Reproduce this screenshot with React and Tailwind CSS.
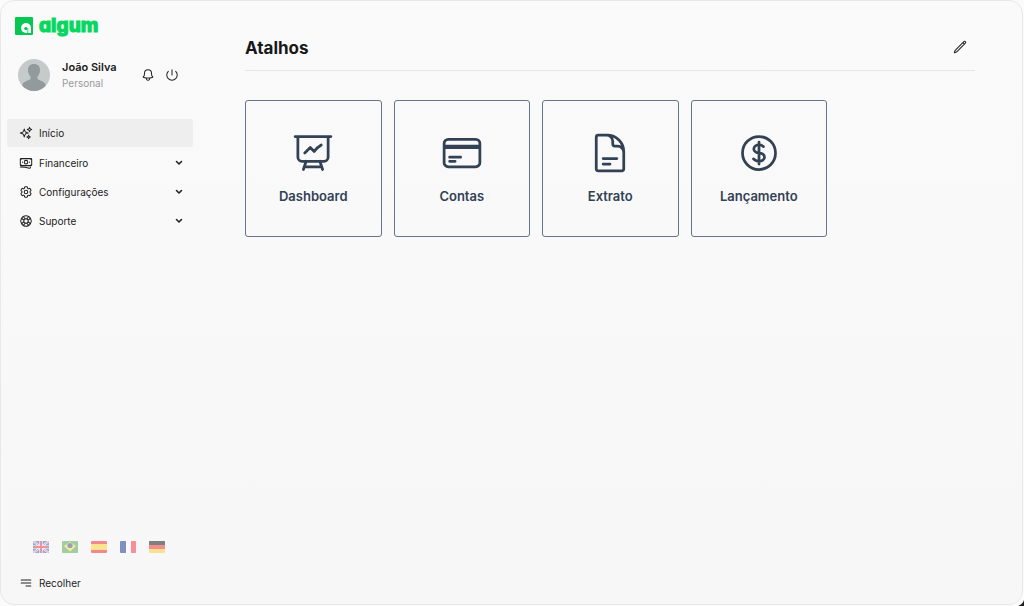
import {
  HiOutlineBanknotes,
  HiOutlineBars3BottomRight,
  HiOutlineBell,
  HiOutlineCog6Tooth,
  HiOutlineCreditCard,
  HiOutlineCurrencyDollar,
  HiOutlineDocumentText,
  HiOutlineLifebuoy,
  HiOutlinePencil,
  HiOutlinePower,
  HiOutlinePresentationChartLine,
  HiOutlineSparkles,
} from "react-icons/hi2";

const menu = [
  { label: "Financeiro", Icon: HiOutlineBanknotes },
  { label: "Configurações", Icon: HiOutlineCog6Tooth },
  { label: "Suporte", Icon: HiOutlineLifebuoy },
];

const shortcuts = [
  { label: "Dashboard", Icon: HiOutlinePresentationChartLine },
  { label: "Contas", Icon: HiOutlineCreditCard },
  { label: "Extrato", Icon: HiOutlineDocumentText },
  { label: "Lançamento", Icon: HiOutlineCurrencyDollar },
];

const flags = [
  {
    label: "English",
    art: (
      <>
        <rect width="16" height="12" fill="#2468bc" />
        <path d="M0 0l16 12M16 0L0 12" stroke="#fff" strokeWidth="2" />
        <path d="M0 0l16 12M16 0L0 12" stroke="#e5455a" strokeWidth="1" />
        <path d="M8 0v12M0 6h16" stroke="#fff" strokeWidth="3.200" />
        <path d="M8 0v12M0 6h16" stroke="#e5304a" strokeWidth="2" />
      </>
    ),
  },
  {
    label: "Português",
    art: (
      <>
        <rect width="16" height="12" fill="#4ba64b" />
        <path d="M8 1L14 5l-6 5.500L2 5z" fill="#ffdc3c" />
        <circle cx="8" cy="4.500" r="2.600" fill="#2b4a9b" />
      </>
    ),
  },
  {
    label: "Español",
    art: (
      <>
        <rect width="16" height="12" fill="#f01c24" />
        <rect y="3" width="16" height="6" fill="#ffd02e" />
      </>
    ),
  },
  {
    label: "Français",
    art: (
      <>
        <rect width="16" height="12" fill="#fff" />
        <rect width="6" height="12" fill="#0a2a8c" />
        <rect x="11" width="5" height="12" fill="#ff2638" />
      </>
    ),
  },
  {
    label: "Deutsch",
    art: (
      <>
        <rect width="16" height="12" fill="#fdcb2c" />
        <rect width="16" height="8" fill="#ee2a20" />
        <rect width="16" height="4" fill="#0a0a0a" />
      </>
    ),
  },
];

function Logo() {
  return (
    <a href="#inicio" className="flex h-6 items-center gap-1.5 self-start pl-2 text-[#05d75f]">
      <svg viewBox="0 0 18 18" className="h-[18px] w-[18px]" aria-hidden="true">
        <rect width="18" height="18" rx="1" fill="#05c853" />
        <path d="M16 16V11a5 5 0 1 0-5 5z" fill="#fff" />
        <circle cx="10.800" cy="11.600" r="1.600" fill="#05c853" />
        <path d="M12.800 11v5" stroke="#05c853" strokeWidth="0.800" />
      </svg>
      <span className="font-['Inter',sans-serif] text-[19px] leading-6 font-extrabold [-webkit-text-stroke:1px_#05d75f] [font-feature-settings:'cv11','ss01']">
        algum
      </span>
    </a>
  );
}

function Chevron() {
  return (
    <svg viewBox="0 0 8 6" className="ml-auto h-1.5 w-2" fill="none" stroke="currentColor" strokeWidth="1.600" strokeLinecap="round" strokeLinejoin="round" aria-hidden="true">
      <path d="M1.500 1.500L4 4l2.500-2.500" />
    </svg>
  );
}

function Sidebar() {
  return (
    <aside className="flex w-[192px] shrink-0 flex-col pt-[13px] pb-[13px] pl-[6px]">
      <Logo />
      <div className="mt-[21px] flex items-center pr-[14px] pl-[11px]">
        <svg viewBox="0 0 32 32" className="h-8 w-8 shrink-0 rounded-full" role="img" aria-label="João Silva">
          <rect width="32" height="32" fill="#c5cbcb" />
          <path d="M10 11c0-4 2.500-6 6-6s6 2 6 6c0 3-1 5-2.500 6.500v2.500c2 1.500 6 2 8 5V32H4.500v-7c2-3 6-3.500 8-5v-2.500C11 16 10 14 10 11z" fill="#929a9b" />
        </svg>
        <div className="ml-3 flex flex-col">
          <span className="text-[11px] leading-4 font-semibold text-[#202020]">João Silva</span>
          <span className="text-[10px] leading-4 text-[#999]">Personal</span>
        </div>
        <div className="ml-auto flex gap-2.5">
          <button type="button" aria-label="Notificações"><HiOutlineBell className="h-[14px] w-[14px] stroke-[1.75]" /></button>
          <button type="button" aria-label="Sair"><HiOutlinePower className="h-[14px] w-[14px] stroke-[1.75]" /></button>
        </div>
      </div>
      <nav className="mt-7 flex flex-col text-[10px] leading-4">
        <a href="#inicio" className="mb-px flex h-7 items-center gap-1.5 rounded-[3px] bg-[#eee] px-3">
          <HiOutlineSparkles className="h-[14px] w-[14px] stroke-[1.75]" />
          Início
        </a>
        {menu.map(({ label, Icon }) => (
          <button type="button" key={label} className="flex h-[29px] items-center gap-1.5 pr-2.5 pl-3">
            <Icon className="h-[14px] w-[14px] stroke-[1.75]" />
            {label}
            <Chevron />
          </button>
        ))}
      </nav>
      <div className="mt-auto flex gap-[13px] pl-[26px]">
        {flags.map(({ label, art }) => (
          <button type="button" key={label} aria-label={label} className="opacity-50">
            <svg viewBox="0 0 16 12" className="h-3 w-4 rounded-[1px]" aria-hidden="true">{art}</svg>
          </button>
        ))}
      </div>
      <button type="button" className="mt-[22px] flex items-center gap-1.5 self-start pl-3 text-[10px] leading-4">
        <HiOutlineBars3BottomRight className="h-[14px] w-[14px] stroke-[1.75]" />
        Recolher
      </button>
    </aside>
  );
}

export default function App() {
  return (
    <div className="relative flex min-h-screen bg-[#fbfbfb] pr-px pb-px font-['Inter',sans-serif] text-[#222]">
      <svg viewBox="0 0 6 6" className="absolute right-0 bottom-0 h-1.5 w-1.5" aria-hidden="true">
        <path d="M6 0v6H0q4.500-1.500 6-6z" fill="#222" />
      </svg>
      <div className="flex flex-1 rounded-[14px] border border-[#e8e8e8] bg-linear-to-b from-[#fafafa] to-[#f7f7f7]">
        <Sidebar />
        <main className="flex-1 pt-9 pr-[47px] pl-[52px]">
          <header className="flex items-start justify-between border-b border-[#e5e5e5] pr-2 pb-[11px]">
            <h1 className="text-[17px] leading-[22px] font-bold text-[#181818]">Atalhos</h1>
            <button type="button" aria-label="Editar atalhos" className="mt-[3px]">
              <HiOutlinePencil className="h-[14px] w-[14px] stroke-[1.75]" />
            </button>
          </header>
          <div className="mt-[29px] grid max-w-[582px] grid-cols-4 gap-3">
            {shortcuts.map(({ label, Icon }) => (
              <a key={label} href={"#" + label.toLowerCase()} className="flex h-[137px] flex-col items-center rounded-[3px] border border-[#64748b] pt-[30px] text-[#334155]">
                <Icon className="h-11 w-11" />
                <span className="mt-[11px] text-[13px] leading-5 font-semibold">{label}</span>
              </a>
            ))}
          </div>
        </main>
      </div>
    </div>
  );
}
